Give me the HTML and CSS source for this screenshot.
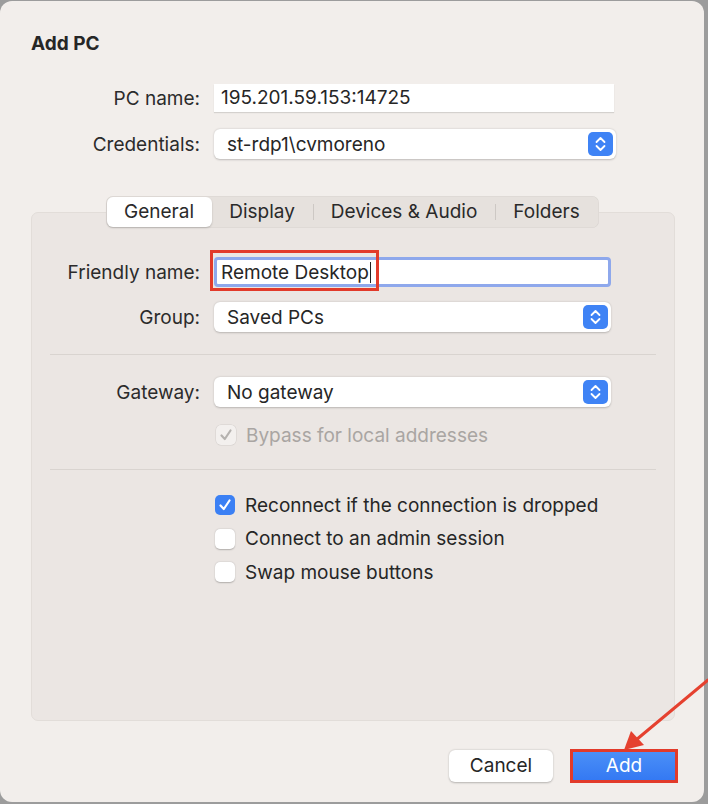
FILE: index.html
```html
<!DOCTYPE html>
<html lang="en">
<head>
<meta charset="utf-8">
<title>Add PC</title>
<link rel="stylesheet" href="styles.css">
</head>
<body>
<div class="window">
  <h1 class="title">Add PC</h1>

  <div class="form top-form">
    <div class="label">PC name:</div>
    <div class="textfield pcname">195.201.59.153:14725</div>
    <div class="label">Credentials:</div>
    <div class="popup cred">
      <span class="popup-text">st-rdp1\cvmoreno</span>
      <svg class="stepper" width="25" height="24" viewBox="0 0 25 24"><rect x="0" y="0" width="25" height="24" rx="5" fill="#3f83f5"/><path d="M8.5 10 L12.5 6 L16.5 10 M8.5 14 L12.5 18 L16.5 14" fill="none" stroke="#fff" stroke-width="1.8" stroke-linecap="round" stroke-linejoin="round"/></svg>
    </div>
  </div>

  <div class="tabs">
    <div class="seg">
      <div class="tab active t-general">General</div>
      <div class="tab t-display">Display</div>
      <div class="sep"></div>
      <div class="tab t-devices">Devices &amp; Audio</div>
      <div class="sep"></div>
      <div class="tab t-folders">Folders</div>
    </div>
  </div>

  <div class="panel">
    <div class="form panel-form">
      <div class="label">Friendly name:</div>
      <div class="focusfield">
        <span class="ff-text">Remote Desktop</span><span class="caret"></span>
        <span class="redbox"></span>
      </div>
      <div class="label">Group:</div>
      <div class="popup">
        <span class="popup-text">Saved PCs</span>
        <svg class="stepper" width="25" height="24" viewBox="0 0 25 24"><rect x="0" y="0" width="25" height="24" rx="5" fill="#3f83f5"/><path d="M8.5 10 L12.5 6 L16.5 10 M8.5 14 L12.5 18 L16.5 14" fill="none" stroke="#fff" stroke-width="1.8" stroke-linecap="round" stroke-linejoin="round"/></svg>
      </div>
    </div>

    <div class="hr"></div>

    <div class="form panel-form gw-form">
      <div class="label">Gateway:</div>
      <div class="popup">
        <span class="popup-text">No gateway</span>
        <svg class="stepper" width="25" height="24" viewBox="0 0 25 24"><rect x="0" y="0" width="25" height="24" rx="5" fill="#3f83f5"/><path d="M8.5 10 L12.5 6 L16.5 10 M8.5 14 L12.5 18 L16.5 14" fill="none" stroke="#fff" stroke-width="1.8" stroke-linecap="round" stroke-linejoin="round"/></svg>
      </div>
      <div></div>
      <div class="check disabled">
        <span class="box">
          <svg width="20" height="20" viewBox="0 0 20 20"><path d="M5.5 10.5 L8.8 14 L14.5 5.5" fill="none" stroke="#b5b2af" stroke-width="2.2" stroke-linecap="round" stroke-linejoin="round"/></svg>
        </span>
        <span>Bypass for local addresses</span>
      </div>
    </div>

    <div class="hr hr2"></div>

    <div class="checks">
      <div class="check">
        <span class="box on">
          <svg width="20" height="20" viewBox="0 0 20 20"><path d="M5.5 10.5 L8.8 14 L14.5 5.5" fill="none" stroke="#fff" stroke-width="2.2" stroke-linecap="round" stroke-linejoin="round"/></svg>
        </span>
        <span>Reconnect if the connection is dropped</span>
      </div>
      <div class="check">
        <span class="box"></span>
        <span>Connect to an admin session</span>
      </div>
      <div class="check">
        <span class="box"></span>
        <span>Swap mouse buttons</span>
      </div>
    </div>
  </div>

  <div class="actions">
    <div class="btn cancel">Cancel</div>
    <div class="addwrap"><div class="btn add">Add</div></div>
  </div>

  <svg class="arrow" width="110" height="90" viewBox="0 0 110 90">
    <line x1="108" y1="2" x2="36" y2="62" stroke="#e5412f" stroke-width="3" stroke-linecap="round"/>
    <path d="M24 72 L31 53 L44 67 Z" fill="#e5412f"/>
  </svg>
</div>
</body>
</html>
```

FILE: styles.css
```css
* { box-sizing: border-box; }

html, body {
  margin: 0;
  padding: 0;
}

body {
  background: #9c9c9c;
  padding-top: 1px;
  width: 708px;
  height: 804px;
  overflow: hidden;
  font-family: "Inter", "Noto Sans", sans-serif;
  color: #262626;
}

.window {
  position: relative;
  width: 704px;
  height: 801px;
  background: #f2eeeb;
  border-radius: 12px;
  padding-top: 33px;
}

.title {
  margin: 0 0 0 31px;
  font-size: 19px;
  line-height: 20px;
  font-weight: 700;
  color: #262626;
}

.form {
  display: grid;
  align-items: center;
  font-size: 19px;
}

.label {
  text-align: right;
  color: #2b2b2b;
  white-space: nowrap;
}

.top-form {
  margin-top: 30px;
  padding-left: 31px;
  grid-template-columns: 169px 402px;
  column-gap: 14px;
  row-gap: 17px;
}

.textfield {
  height: 28px;
  width: 400px;
  background: #fff;
  box-shadow: 0 1px 1px rgba(0,0,0,0.12);
  padding-left: 7px;
  line-height: 28px;
  color: #262626;
}

.popup {
  position: relative;
  height: 30px;
  width: 397px;
  background: #fff;
  border-radius: 6px;
  box-shadow: 0 0.5px 2px rgba(0,0,0,0.22);
  display: flex;
  align-items: center;
  justify-content: space-between;
  padding: 0 3px 0 13px;
}

.popup.cred { width: 402px; }

.popup-text { color: #262626; }

.stepper { display: block; }

.tabs {
  position: relative;
  z-index: 1;
  display: flex;
  justify-content: center;
  margin-top: 37px;
  margin-bottom: -16px;
}

.seg {
  display: flex;
  align-items: center;
  height: 32px;
  background: #e6e1dd;
  border-radius: 7px;
  box-shadow: inset 0 0 0 0.5px rgba(0,0,0,0.06);
  padding: 0 1px;
  font-size: 19px;
}

.tab {
  height: 30px;
  line-height: 30px;
  text-align: center;
  color: #2a2a2a;
  border-radius: 6px;
}

.t-general { width: 105px; }
.t-display { width: 101px; }
.t-devices { width: 181px; }
.t-folders { width: 102px; }

.tab.active {
  background: #fff;
  box-shadow: 0 1px 2px rgba(0,0,0,0.2);
}

.sep {
  width: 1px;
  height: 16px;
  background: #cdc8c4;
}

.panel {
  margin: 0 0 0 31px;
  width: 644px;
  height: 509px;
  background: #ebe6e3;
  border: 1px solid #e2ddd9;
  border-radius: 7px;
  padding: 44px 18px 0 18px;
}

.panel-form {
  grid-template-columns: 150px 397px;
  column-gap: 14px;
  row-gap: 15px;
}

.gw-form { row-gap: 18px; }

.focusfield {
  position: relative;
  height: 30px;
  width: 397px;
  background: #fff;
  border: 3px solid #8ea8ec;
  border-radius: 4px;
  display: flex;
  align-items: center;
  padding-left: 4px;
}

.ff-text { color: #262626; }

.caret {
  display: inline-block;
  width: 1px;
  height: 21px;
  background: #222;
  margin-left: 1px;
}

.redbox {
  position: absolute;
  left: -7px;
  top: -10px;
  width: 169px;
  height: 41px;
  border: 3px solid #e23a2a;
}

.hr {
  height: 1px;
  background: #d9d4d0;
  margin: 22px 0 22px 0;
}

.hr2 {
  margin-top: 24px;
  margin-bottom: 25px;
}

.check {
  display: flex;
  align-items: center;
  gap: 10px;
  font-size: 19px;
  color: #262626;
  height: 20px;
}

.check.disabled { color: #a9a5a2; padding-left: 2px; }

.box {
  width: 20px;
  height: 20px;
  border-radius: 5px;
  background: #fff;
  box-shadow: 0 0.5px 1.5px rgba(0,0,0,0.25);
  display: flex;
  flex: none;
}

.disabled .box {
  background: #f3f0ee;
  box-shadow: 0 0 0 0.5px rgba(0,0,0,0.1);
}

.box.on {
  background: #3b80f4;
  box-shadow: none;
}

.checks {
  display: flex;
  flex-direction: column;
  gap: 13.5px;
  padding-left: 165px;
}

.actions {
  display: flex;
  justify-content: flex-end;
  align-items: center;
  gap: 17px;
  margin-top: 28px;
  padding-right: 26px;
}

.btn {
  width: 104px;
  height: 30px;
  line-height: 30px;
  text-align: center;
  font-size: 19px;
  border-radius: 6px;
}

.cancel {
  background: #fff;
  color: #262626;
  box-shadow: 0 0.5px 2px rgba(0,0,0,0.25);
  height: 32px;
  line-height: 32px;
}

.addwrap {
  border: 3px solid #e23a2a;
  width: 108px;
  height: 34px;
  display: flex;
  align-items: center;
  justify-content: center;
  background: #f07a6d;
}

.add {
  width: 102px;
  height: 28px;
  line-height: 28px;
  border-radius: 0;
  background: linear-gradient(#4b8ff7, #3479f3);
  color: #fff;
}

.arrow {
  position: absolute;
  left: 600px;
  top: 677px;
}
```
